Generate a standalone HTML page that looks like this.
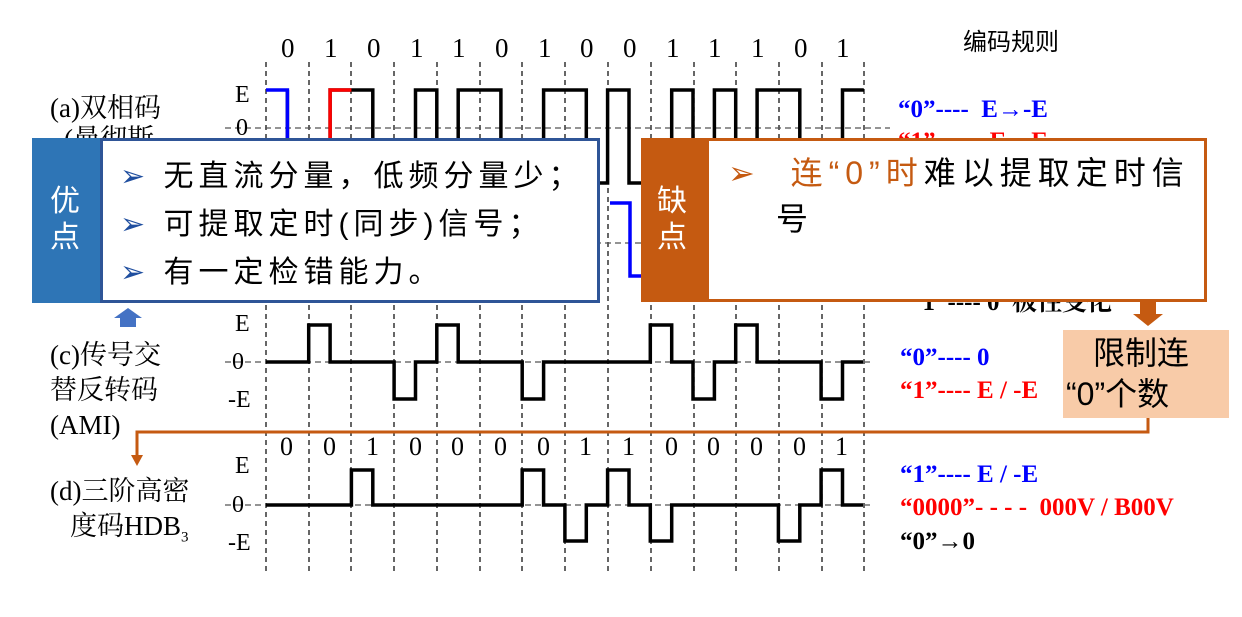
<!DOCTYPE html>
<html><head><meta charset="utf-8"><style>
body{margin:0;width:1242px;height:617px;overflow:hidden;background:#fff;position:relative;font-family:"Liberation Serif","Noto Serif CJK SC",serif}
.t{position:absolute;white-space:nowrap;line-height:1}
.cj{font-family:"Liberation Sans","Noto Sans CJK SC",sans-serif}
svg{position:absolute;left:0;top:0}
.box{position:absolute}
</style></head><body>
<svg width="1242" height="617">
<g stroke="#000" stroke-width="1.2" stroke-dasharray="5,4">
<line x1="266" y1="62" x2="266" y2="575"/><line x1="309" y1="62" x2="309" y2="575"/><line x1="351" y1="62" x2="351" y2="575"/><line x1="394" y1="62" x2="394" y2="575"/><line x1="437" y1="62" x2="437" y2="575"/><line x1="480" y1="62" x2="480" y2="575"/><line x1="522" y1="62" x2="522" y2="575"/><line x1="565" y1="62" x2="565" y2="575"/><line x1="608" y1="62" x2="608" y2="575"/><line x1="651" y1="62" x2="651" y2="575"/><line x1="694" y1="62" x2="694" y2="575"/><line x1="736" y1="62" x2="736" y2="575"/><line x1="779" y1="62" x2="779" y2="575"/><line x1="822" y1="62" x2="822" y2="575"/><line x1="864" y1="62" x2="864" y2="575"/>
</g>
<g stroke="#555" stroke-width="1.2" stroke-dasharray="6,4">
<line x1="225" y1="128" x2="890" y2="128"/><line x1="225" y1="243" x2="890" y2="243"/><line x1="225" y1="362" x2="870" y2="362"/><line x1="225" y1="505" x2="870" y2="505"/>
</g>
<g fill="none" stroke="#000" stroke-width="3.5">
<path d="M287.4 90 V183 H330.1 V90 H372.8 V183 H415.5 V90 H436.8 V183 H458.2 V90 H500.9 V183 H543.6 V90 H586.3 V183 H607.6 V90 H629 V183 H671.7 V90 H693 V183 H714.4 V90 H735.7 V183 H757.1 V90 H799.8 V183 H842.5 V90 H863.8"/>
<path d="M266 362 H308.7 V325 H330.1 V362 H394.1 V399 H415.5 V362 H436.8 V325 H458.2 V362 H522.2 V399 H543.6 V362 H650.3 V325 H671.7 V362 H693 V399 H714.4 V362 H735.7 V325 H757.1 V362 H821.1 V399 H842.5 V362 H863"/>
<path d="M266 505 H351.4 V470 H372.8 V505 H522.2 V470 H543.6 V505 H564.9 V541 H586.3 V505 H607.6 V470 H629 V505 H650.3 V541 H671.7 V505 H778.4 V541 H799.8 V505 H821.1 V470 H842.5 V505 H863"/>
</g>
<path d="M266 90 H287.4 V140" fill="none" stroke="#00f" stroke-width="3.5"/>
<path d="M330.1 140 V90 H351.4" fill="none" stroke="#f00" stroke-width="3.5"/>
<path d="M610 203 H630 V276 H641" fill="none" stroke="#00f" stroke-width="3.5"/>
<path d="M1148 418 V432 H137 V455" fill="none" stroke="#c55a11" stroke-width="3"/>
<polygon points="131,455 143,455 137,466" fill="#c55a11"/>
<polygon points="1140,302 1156,302 1156,314 1163,314 1148,326 1133,314 1140,314" fill="#c55a11"/>
<polygon points="128,308 142,318 136,318 136,327 120,327 120,318 114,318" fill="#4472c4"/>
</svg>
<div class="t" style="left:281px;top:35px;font-size:27px">
<span style="position:absolute;left:0">0</span><span style="position:absolute;left:43px">1</span><span style="position:absolute;left:86px">0</span><span style="position:absolute;left:129px">1</span><span style="position:absolute;left:171px">1</span><span style="position:absolute;left:214px">0</span><span style="position:absolute;left:257px">1</span><span style="position:absolute;left:299px">0</span><span style="position:absolute;left:342px">0</span><span style="position:absolute;left:385px">1</span><span style="position:absolute;left:427px">1</span><span style="position:absolute;left:470px">1</span><span style="position:absolute;left:513px">0</span><span style="position:absolute;left:555px">1</span></div>
<div class="t" style="left:280px;top:434px;font-size:26px">
<span style="position:absolute;left:0">0</span><span style="position:absolute;left:43px">0</span><span style="position:absolute;left:86px">1</span><span style="position:absolute;left:129px">0</span><span style="position:absolute;left:171px">0</span><span style="position:absolute;left:214px">0</span><span style="position:absolute;left:257px">0</span><span style="position:absolute;left:299px">1</span><span style="position:absolute;left:342px">1</span><span style="position:absolute;left:385px">0</span><span style="position:absolute;left:427px">0</span><span style="position:absolute;left:470px">0</span><span style="position:absolute;left:513px">0</span><span style="position:absolute;left:555px">1</span></div>
<div class="t cj" style="left:963px;top:31px;font-size:24px">编码规则</div>
<div class="t" style="left:235px;top:83px;font-size:24px">E</div>
<div class="t" style="left:236px;top:116px;font-size:24px">0</div>
<div class="t" style="left:235px;top:312px;font-size:24px">E</div>
<div class="t" style="left:232px;top:350px;font-size:24px">0</div>
<div class="t" style="left:228px;top:388px;font-size:24px">-E</div>
<div class="t" style="left:235px;top:454px;font-size:24px">E</div>
<div class="t" style="left:232px;top:493px;font-size:24px">0</div>
<div class="t" style="left:228px;top:531px;font-size:24px">-E</div>
<div class="t" style="left:50px;top:95px;font-size:27px">(a)双相码</div>
<div class="t" style="left:64px;top:126px;font-size:27px">(曼彻斯</div>
<div class="t" style="left:50px;top:342px;font-size:27px">(c)传号交</div>
<div class="t" style="left:50px;top:377px;font-size:27px">替反转码</div>
<div class="t" style="left:50px;top:412px;font-size:27px">(AMI)</div>
<div class="t" style="left:50px;top:478px;font-size:27px">(d)三阶高密</div>
<div class="t" style="left:70px;top:513px;font-size:27px">度码HDB<sub style="font-size:15px">3</sub></div>
<div class="t" style="left:898px;top:97px;font-size:25px;color:#00f;font-weight:bold">“0”----&nbsp; E→-E</div>
<div class="t" style="left:898px;top:129px;font-size:25px;color:#f00;font-weight:bold">“1”----&nbsp; -E→E</div>
<div class="t" style="left:910px;top:290px;font-size:25px;font-weight:bold">“1”---- 0&nbsp; 极性变化</div>
<div class="t" style="left:900px;top:345px;font-size:25px;color:#00f;font-weight:bold">“0”---- 0</div>
<div class="t" style="left:900px;top:378px;font-size:25px;color:#f00;font-weight:bold">“1”---- E / -E</div>
<div class="t" style="left:900px;top:462px;font-size:25px;color:#00f;font-weight:bold">“1”---- E / -E</div>
<div class="t" style="left:900px;top:495px;font-size:25px;color:#f00;font-weight:bold">“0000”- - - -&nbsp; 000V / B00V</div>
<div class="t" style="left:900px;top:529px;font-size:25px;font-weight:bold">“0”→0</div>
<div class="box" style="left:1063px;top:330px;width:166px;height:88px;background:#f8cba8"></div>
<div class="t cj" style="left:1093px;top:337px;font-size:32px">限制连</div>
<div class="t cj" style="left:1066px;top:378px;font-size:32px">“0”个数</div>
<div class="box" style="left:32px;top:138px;width:68px;height:165px;background:#2e75b6"></div>
<div class="t cj" style="left:50px;top:184px;font-size:30px;color:#fff;line-height:36px;white-space:normal;width:32px">优点</div>
<div class="box" style="left:100px;top:138px;width:494px;height:159px;background:#fff;border:3px solid #2f5597"></div>
<div class="t cj" style="left:120px;top:153px;font-size:30px;line-height:48px;letter-spacing:5px"><span style="color:#1f4e9f">➢</span> 无直流分量，低频分量少；<br><span style="color:#1f4e9f">➢</span> 可提取定时(同步)信号；<br><span style="color:#1f4e9f">➢</span> 有一定检错能力。</div>
<div class="box" style="left:641px;top:138px;width:71px;height:164px;background:#c55a11"></div>
<div class="t cj" style="left:657px;top:184px;font-size:30px;color:#fff;line-height:36px;white-space:normal;width:32px">缺点</div>
<div class="box" style="left:709px;top:138px;width:495px;height:158px;background:#fff;border:3px solid #c55a11;border-left:none"></div>
<div class="t cj" style="left:728px;top:150px;font-size:32px;line-height:46px;letter-spacing:6px"><span style="color:#c55a11">➢&nbsp; 连“0”时</span>难以提取定时信<br><span style="margin-left:48px">号</span></div>
</body></html>
